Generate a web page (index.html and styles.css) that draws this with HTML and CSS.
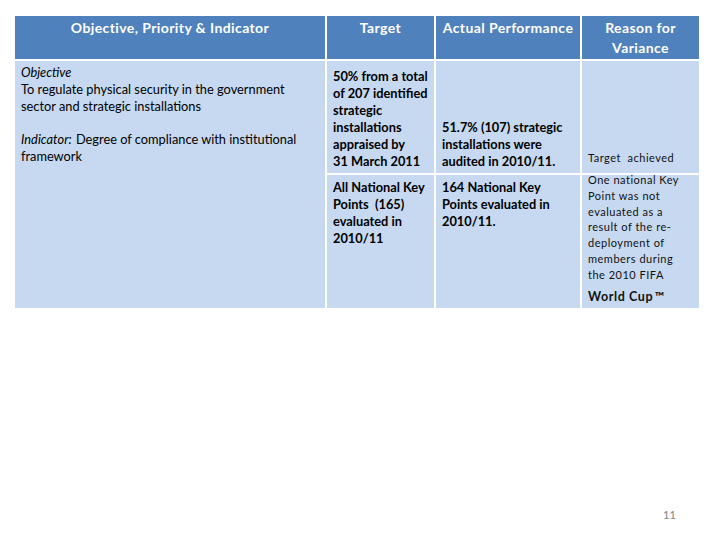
FILE: index.html
```html
<!DOCTYPE html>
<html>
<head>
<meta charset="utf-8">
<link rel="stylesheet" href="styles.css">
</head>
<body>
<div class="page">
  <div class="table">
    <div class="hd">Objective, Priority &amp; Indicator</div>
    <div class="hd">Target</div>
    <div class="hd">Actual Performance</div>
    <div class="hd">Reason for<br>Variance</div>

    <div class="c c1">
      <p><i>Objective</i><br>To regulate physical security in the government<br>sector and strategic installations</p>
      <p class="ind"><span class="it">Indicator:</span> Degree of compliance with institutional<br>framework</p>
    </div>
    <div class="c bold bottom"><span>50% from a total<br>of 207 identified<br>strategic<br>installations<br>appraised by<br>31 March 2011</span></div>
    <div class="c bold bottom"><span>51.7% (107) strategic<br>installations were<br>audited in 2010/11.</span></div>
    <div class="c light bottom ta">Target&nbsp; achieved</div>

    <div class="c bold">All National Key<br>Points&nbsp; (165)<br>evaluated in<br>2010/11</div>
    <div class="c bold">164 National Key<br>Points evaluated in<br>2010/11.</div>
    <div class="c light r2">
      <div class="reason">One national Key<br>Point was not<br>evaluated as a<br>result of the re-<br>deployment of<br>members during<br>the 2010 FIFA</div>
      <div class="wc">World Cup&#8202;&#8482;</div>
    </div>
  </div>
  <div class="pnum">11</div>
</div>
</body>
</html>
```
FILE: styles.css
```css
html, body { margin: 0; padding: 0; background: #fff; }
body { font-family: Lato, "Liberation Sans", Arial, sans-serif; color: #000; }
.page { width: 720px; height: 540px; position: relative; }
.table {
  position: absolute;
  left: 15px; top: 16px;
  display: grid;
  grid-template-columns: 310px 107px 144px 117px;
  grid-template-rows: 43px 112px 133px;
  gap: 2px;
}
.hd {
  background: #4f81bd;
  color: #fff;
  font-weight: bold;
  font-size: 14px;
  letter-spacing: 0.4px;
  text-align: center;
  line-height: 20px;
  padding-top: 2px;
}
.c {
  background: #c6d9f0;
  font-size: 12.8px;
  line-height: 17px;
  padding: 4px 6px;
}
.c1 { grid-row: span 2; padding-top: 3px; }
.c1 p { margin: 0; }
.c1 .ind { margin-top: 16px; }
.it { font-style: italic; margin-right: 1px; }
.bold { font-weight: bold; }
.bottom { display: flex; align-items: flex-end; padding-bottom: 3px; }
.light { font-size: 11px; line-height: 15.8px; color: #111; letter-spacing: 0.5px; }
.ta { padding-bottom: 7px; }
.r2 { padding-top: 0; }
.reason { margin-top: -3px; }
.wc { font-size: 12.5px; font-weight: bold; margin-top: 6px; letter-spacing: 0.6px; }
.pnum {
  position: absolute;
  left: 663px; top: 508px;
  font-size: 11px;
  color: #808080;
}
```
